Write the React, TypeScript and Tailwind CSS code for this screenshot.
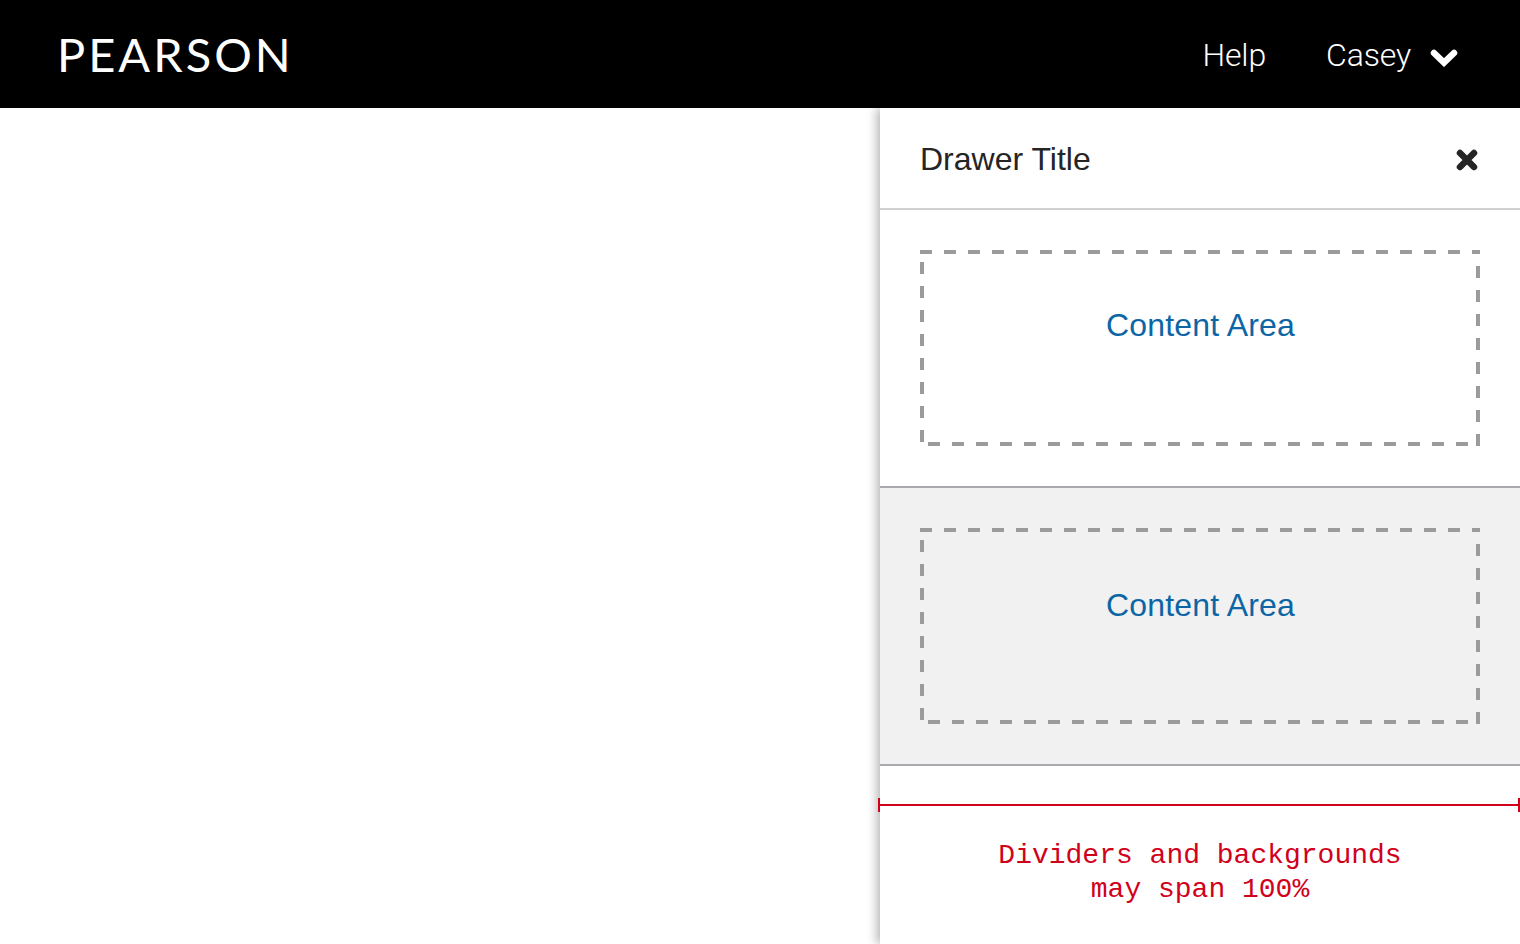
import React from 'react';

const DashedBox = ({ textTop }: { textTop: string }) => (
  <div className={`relative h-[196px] w-[560px] pl-[1px] text-center ${textTop}`}>
    <svg className="absolute left-0 top-0" width="560" height="196" fill="none" stroke="#9b9b9b" strokeWidth="4" strokeDasharray="12 12">
      <line x1="0" y1="2" x2="560" y2="2" />
      <line x1="558" y1="196" x2="558" y2="0" />
      <line x1="8" y1="194" x2="548" y2="194" />
      <line x1="2" y1="12" x2="2" y2="192" />
    </svg>
    <span className="text-[32px] leading-[46px] tracking-[0.17px] text-[#0d65a6] font-['Liberation_Sans',sans-serif]">Content Area</span>
  </div>
);

export default function App() {
  return (
    <div className="flex h-[944px] w-[1520px] flex-col overflow-hidden bg-white">
      <header className="flex h-[108px] shrink-0 items-center justify-between bg-black pl-[57px] pr-[62px] text-white">
        <div className="text-[47px] font-normal leading-none tracking-[3px] font-['Lato',sans-serif]">PEARSON</div>
        <nav className="flex items-center text-[32px] font-light tracking-[-0.15px] font-['Roboto',sans-serif]">
          <a className="mt-[2px]">Help</a>
          <a className="ml-[60px] mt-[2px]">Casey</a>
          <svg className="ml-[19px] mt-[8px]" width="28" height="18" viewBox="0 0 28 18" fill="none">
            <path d="M4 4 L14 13.6 L24 4" stroke="#fff" strokeWidth="6.5" strokeLinecap="round" />
          </svg>
        </nav>
      </header>

      <div className="flex flex-1 justify-end">
        <aside className="relative w-[640px] bg-white shadow-[-3px_0_10px_rgba(0,0,0,0.3)]">
          <div className="flex h-[102px] items-center justify-between border-b-2 border-[#d0d0d0] pl-10 pr-10 pt-[2px]">
            <h2 className="text-[32px] text-[#252525] font-['Liberation_Sans',sans-serif]">Drawer Title</h2>
            <svg width="24" height="24" viewBox="0 0 24 24" className="mr-[1px] mt-[1px]">
              <path d="M5 5 L19 19 M19 5 L5 19" stroke="#252525" strokeWidth="6.5" strokeLinecap="round" />
            </svg>
          </div>

          <div className="border-b-2 border-[#a9a9ad] p-10">
            <DashedBox textTop="pt-[52px]" />
          </div>
          <div className="border-b-2 border-[#a9a9ad] bg-[#f1f1f1] p-10">
            <DashedBox textTop="pt-[54px]" />
          </div>

          <div className="relative mt-[38px] h-[2px] bg-[#d0021b]">
            <div className="absolute -left-[2px] -top-[6px] h-[14px] w-[2px] bg-[#d0021b]" />
            <div className="absolute right-0 -top-[6px] h-[14px] w-[2px] bg-[#d0021b]" />
          </div>

          <p className="mt-[33px] text-center text-[28px] leading-[34px] text-[#d0021b] font-['Liberation_Mono',monospace]">
            Dividers and backgrounds
            <br />
            may span 100%
          </p>
        </aside>
      </div>
    </div>
  );
}
